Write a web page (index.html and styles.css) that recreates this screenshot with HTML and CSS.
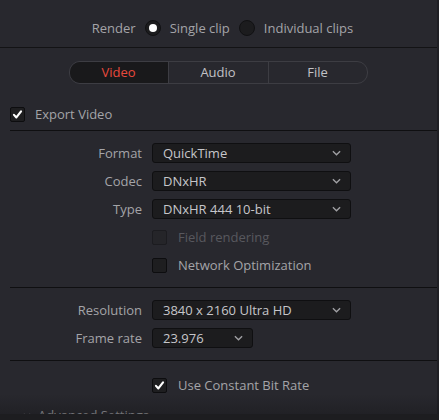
FILE: index.html
```html
<!DOCTYPE html>
<html>
<head>
<meta charset="utf-8">
<link rel="stylesheet" href="styles.css">
</head>
<body>
<div class="panel">
  <div class="render-row">
    <span class="lbl">Render</span>
    <span class="radio on"></span>
    <span class="lbl">Single clip</span>
    <span class="radio"></span>
    <span class="lbl">Individual clips</span>
  </div>

  <div class="tabs-wrap">
    <div class="tabs">
      <div class="tab active">Video</div>
      <div class="tab">Audio</div>
      <div class="tab">File</div>
    </div>
  </div>

  <div class="export-row">
    <span class="check on"><svg viewBox="0 0 14 14"><path d="M3.2 7.4 L5.8 10.2 L10.8 3.6" /></svg></span>
    <span class="lbl">Export Video</span>
  </div>

  <div class="section">
    <div class="frow">
      <div class="flabel">Format</div>
      <div class="select wide"><span>QuickTime</span><svg class="chev" viewBox="0 0 10 6"><path d="M1 1 L5 5 L9 1"/></svg></div>
    </div>
    <div class="frow">
      <div class="flabel">Codec</div>
      <div class="select wide"><span>DNxHR</span><svg class="chev" viewBox="0 0 10 6"><path d="M1 1 L5 5 L9 1"/></svg></div>
    </div>
    <div class="frow">
      <div class="flabel">Type</div>
      <div class="select wide"><span>DNxHR 444 10-bit</span><svg class="chev" viewBox="0 0 10 6"><path d="M1 1 L5 5 L9 1"/></svg></div>
    </div>
    <div class="frow">
      <div class="flabel"></div>
      <div class="crow disabled"><span class="check dim"></span><span>Field rendering</span></div>
    </div>
    <div class="frow">
      <div class="flabel"></div>
      <div class="crow"><span class="check"></span><span>Network Optimization</span></div>
    </div>
  </div>

  <div class="section">
    <div class="frow">
      <div class="flabel">Resolution</div>
      <div class="select wide"><span>3840 x 2160 Ultra HD</span><svg class="chev" viewBox="0 0 10 6"><path d="M1 1 L5 5 L9 1"/></svg></div>
    </div>
    <div class="frow">
      <div class="flabel">Frame rate</div>
      <div class="select narrow"><span>23.976</span><svg class="chev" viewBox="0 0 10 6"><path d="M1 1 L5 5 L9 1"/></svg></div>
    </div>
  </div>

  <div class="section last">
    <div class="frow">
      <div class="flabel"></div>
      <div class="crow"><span class="check on"><svg viewBox="0 0 14 14"><path d="M3.2 7.4 L5.8 10.2 L10.8 3.6" /></svg></span><span>Use Constant Bit Rate</span></div>
    </div>
  </div>

  <div class="adv-row">
    <svg class="adv-chev" viewBox="0 0 10 6"><path d="M1 1 L5 5 L9 1"/></svg>
    <span class="adv-text">Advanced Settings</span>
    <span class="adv-line"></span>
  </div>
</div>
<div class="bottom-shade"></div>
</body>
</html>
```

FILE: styles.css
```css
html, body {
  margin: 0;
  padding: 0;
  background: #28282e;
  width: 439px;
  height: 420px;
  overflow: hidden;
  font-family: "Open Sans", "Noto Sans", sans-serif;
  font-size: 13px;
  color: #a4a4a8;
}

.panel {
  width: 437px;
  height: 420px;
  border-right: 2px solid #1f1f24;
}

.render-row {
  height: 39px;
  padding-top: 8px;
  border-bottom: 1px solid #131315;
  display: flex;
  align-items: center;
  justify-content: center;
  gap: 9px;
  padding-left: 8px;
  box-sizing: content-box;
}

.lbl {
  color: #a4a4a8;
  line-height: 16px;
}

.radio {
  width: 14px;
  height: 14px;
  border-radius: 50%;
  background: #1c1c1e;
  border: 1px solid #111113;
  position: relative;
  flex: none;
}
.radio.on::after {
  content: "";
  position: absolute;
  left: 3px;
  top: 3px;
  width: 8px;
  height: 8px;
  border-radius: 50%;
  background: #ffffff;
}

.tabs-wrap {
  padding-top: 13px;
  display: flex;
  justify-content: center;
  padding-right: 1px;
}
.tabs {
  display: flex;
  height: 21px;
  border: 1px solid #3d3d43;
  border-radius: 11px;
  overflow: hidden;
}
.tab {
  width: 99px;
  text-align: center;
  line-height: 21px;
  color: #c2c2c6;
  border-left: 1px solid #3d3d43;
}
.tab:first-child {
  border-left: none;
  width: 98px;
}
.tab:last-child {
  width: 98px;
}
.tab.active {
  background: #19191b;
  color: #e8493d;
}

.export-row {
  margin-top: 16px;
  height: 31px;
  margin-left: 10px;
  border-bottom: 1px solid #0f0f11;
  display: flex;
  align-items: center;
  gap: 10px;
  box-sizing: border-box;
  padding-bottom: 2px;
}

.check {
  width: 13px;
  height: 13px;
  border: 1px solid #0d0d0f;
  border-radius: 2px;
  background: #1e1e20;
  flex: none;
  display: flex;
}
.check svg {
  width: 13px;
  height: 13px;
}
.check svg path {
  fill: none;
  stroke: #ffffff;
  stroke-width: 2.3;
  stroke-linecap: round;
  stroke-linejoin: round;
}
.check.dim {
  background: #252529;
  border-color: #1c1c20;
}

.section {
  margin-left: 10px;
  padding: 12px 0 12px 0;
  border-bottom: 1px solid #0f0f11;
  display: flex;
  flex-direction: column;
  gap: 8px;
}
.section.last {
  padding-top: 14px;
  padding-bottom: 0;
  border-bottom: none;
}

.frow {
  display: flex;
  align-items: center;
  height: 20px;
}
.flabel {
  width: 132px;
  text-align: right;
  padding-right: 10px;
  color: #a4a4a8;
}

.select {
  height: 18px;
  border: 1px solid #0f0f11;
  border-radius: 3px;
  background: #1c1c1e;
  display: flex;
  align-items: center;
  justify-content: space-between;
  padding: 0 9px 0 10px;
  color: #c6c6ca;
}
.select.wide { width: 178px; }
.select.narrow { width: 80px; }

.chev {
  width: 9px;
  height: 6px;
}
.chev path, .adv-chev path {
  fill: none;
  stroke: #a0a0a4;
  stroke-width: 1.5;
}

.crow {
  display: flex;
  align-items: center;
  gap: 11px;
  color: #a4a4a8;
}
.crow.disabled {
  color: #58585e;
}

.adv-row {
  margin-top: 10px;
  display: flex;
  align-items: center;
  padding-left: 23px;
  height: 20px;
  gap: 7px;
}
.adv-chev {
  width: 8px;
  height: 5px;
}
.adv-text {
  color: #a4a4a8;
}
.adv-line {
  flex: 1;
  height: 1px;
  background: #111113;
  margin-left: 9px;
}

.bottom-shade {
  position: absolute;
  left: 0;
  right: 0;
  bottom: 0;
  height: 26px;
  background: linear-gradient(to bottom, rgba(20,20,22,0) 0%, rgba(20,20,22,0.35) 76%, #1d1d20 78%, #1d1d20 100%);
  pointer-events: none;
}
```
